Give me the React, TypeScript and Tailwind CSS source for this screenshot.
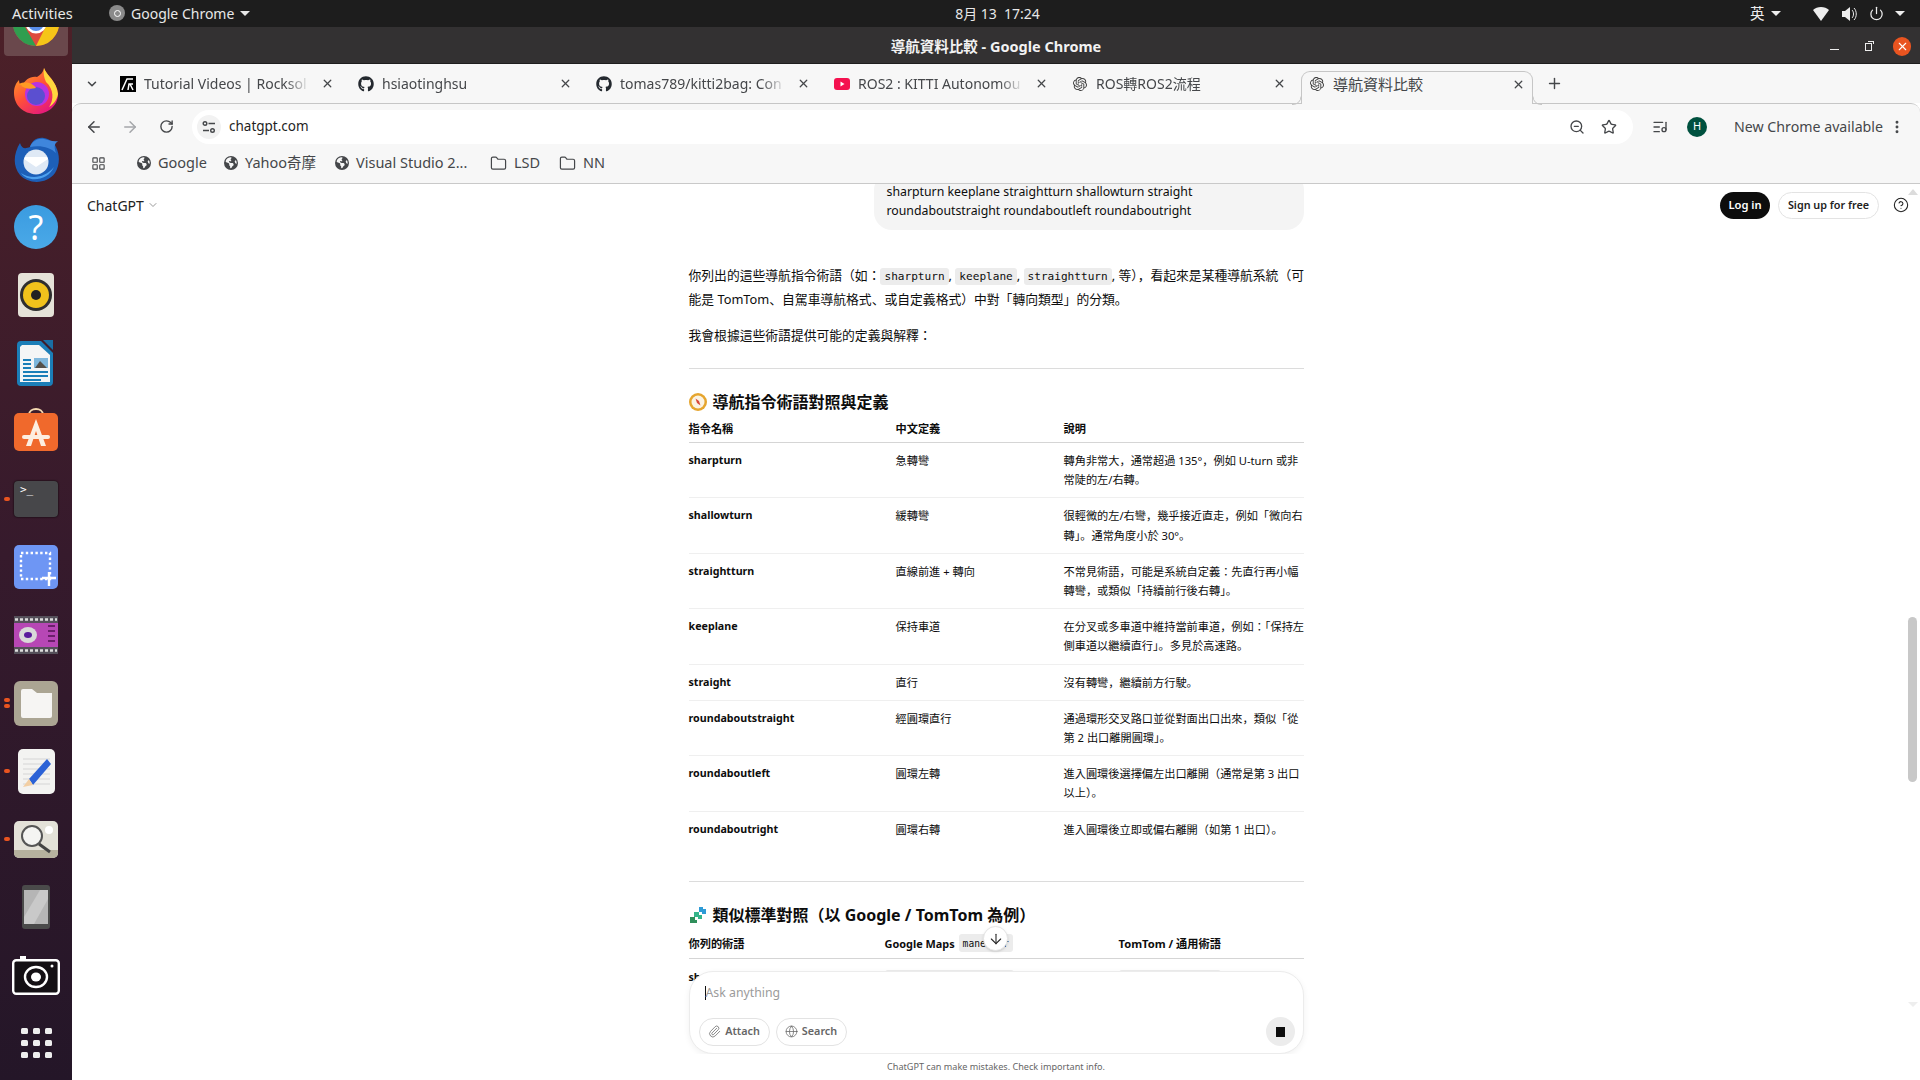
import {
  ArrowDown,
  ArrowLeft,
  ArrowRight,
  ChevronDown,
  CircleHelp,
  EllipsisVertical,
  Folder,
  Globe,
  LayoutGrid,
  ListMusic,
  Paperclip,
  Plus,
  Power,
  RotateCw,
  Star,
  X,
  ZoomOut,
} from "lucide-react";
import type { ReactNode } from "react";
import { FaGithub } from "react-icons/fa";
import { FaEarthAmericas } from "react-icons/fa6";
import { SiOpenai } from "react-icons/si";

const rows1 = [
  ["sharpturn", "急轉彎", "轉角非常大\uFF0C通常超過 135°\uFF0C例如 U-turn 或非\n常陡的左/右轉。"],
  ["shallowturn", "緩轉彎", "很輕微的左/右彎\uFF0C幾乎接近直走\uFF0C例如「微向右\n轉」。通常角度小於 30°。"],
  ["straightturn", "直線前進 + 轉向", "不常見術語\uFF0C可能是系統自定義\uFF1A先直行再小幅\n轉彎\uFF0C或類似「持續前行後右轉」。"],
  ["keeplane", "保持車道", "在分叉或多車道中維持當前車道\uFF0C例如\uFF1A「保持左\n側車道以繼續直行」。多見於高速路。"],
  ["straight", "直行", "沒有轉彎\uFF0C繼續前方行駛。"],
  ["roundaboutstraight", "經圓環直行", "通過環形交叉路口並從對面出口出來\uFF0C類似「從\n第 2 出口離開圓環」。"],
  ["roundaboutleft", "圓環左轉", "進入圓環後選擇偏左出口離開\uFF08通常是第 3 出口\n以上\uFF09。"],
  ["roundaboutright", "圓環右轉", "進入圓環後立即或偏右離開\uFF08如第 1 出口\uFF09。"],
];

function RocksolIcon() {
  return (
    <svg width="16" height="16" viewBox="0 0 16 16">
      <rect width="16" height="16" fill="#000" />
      <path d="M2 14 L7 3 H13 M8 14 L9 8 H13 M10 8 L13 14" fill="none" stroke="#fff" strokeWidth="1.5" />
    </svg>
  );
}

function YoutubeIcon() {
  return (
    <svg width="16" height="16" viewBox="0 0 16 16">
      <rect y="2" width="16" height="12" rx="3" fill="#f4114f" />
      <path d="M6.5 5.5 L10.5 8 L6.5 10.5 Z" fill="#fff" />
    </svg>
  );
}

const tabs: { title: string; icon: ReactNode }[] = [
  { title: "Tutorial Videos | Rocksol", icon: <RocksolIcon /> },
  { title: "hsiaotinghsu", icon: <FaGithub size={16} color="#24292f" /> },
  { title: "tomas789/kitti2bag: Con", icon: <FaGithub size={16} color="#24292f" /> },
  { title: "ROS2 : KITTI Autonomou", icon: <YoutubeIcon /> },
  { title: "ROS轉ROS2流程", icon: <SiOpenai size={14} color="#3c3c3c" /> },
];

function Tab({ title, icon }: { title: string; icon: ReactNode }) {
  return (
    <div className="flex h-[39px] w-[238px] shrink-0 items-center">
      <div className="flex w-[16px] justify-center">{icon}</div>
      <div className="ml-[8px] w-[166px] overflow-hidden whitespace-nowrap text-[14px] text-[#45474a] [mask-image:linear-gradient(to_right,black_85%,transparent)]">
        {title}
      </div>
      <X size={13} strokeWidth={2.4} className="ml-[11px] text-[#45474a]" />
    </div>
  );
}

function Chrome() {
  return (
    <svg width="46" height="46" viewBox="0 0 46 46">
      <circle cx="23" cy="23" r="23" fill="#de4a3c" />
      <path d="M23 46 A23 23 0 0 1 3 11.5 L15 32 Z" fill="#2f9e4f" />
      <path d="M23 46 A23 23 0 0 0 43 11.5 L23 11.5 L32 28 Z" fill="#f5c518" />
      <circle cx="23" cy="23" r="10.5" fill="#fff" />
      <circle cx="23" cy="23" r="8" fill="#5a8ee8" />
    </svg>
  );
}

function Firefox() {
  return (
    <svg width="46" height="48" viewBox="0 0 46 48">
      <defs>
        <linearGradient id="ff" x1="0" y1="0" x2="0.7" y2="1">
          <stop offset="0" stopColor="#ffb01f" />
          <stop offset="0.55" stopColor="#ff4f3a" />
          <stop offset="1" stopColor="#e3177f" />
        </linearGradient>
      </defs>
      <path d="M31 1 C33 8 44 14 45 27 C45 39 35 47 23 47 C10 47 1 38 1 26 C1 20 3 16 6 13 C6 16 7 18 9 19 C12 13 17 9 24 10 C27 8 30 6 31 1 Z" fill="url(#ff)" />
      <path d="M31 1 C33 8 44 14 45 27 C44 33 40 38 36 40 C41 33 41 22 33 15 C31 11 30 6 31 1 Z" fill="#ffd83d" />
      <circle cx="24" cy="27" r="12" fill="#b833e1" />
      <circle cx="23" cy="29" r="9" fill="#5b4fd0" />
      <path d="M6 17 C12 14 20 16 23 21 C18 22 12 23 6 17 Z" fill="#ff9a24" />
    </svg>
  );
}

function Thunderbird() {
  return (
    <svg width="48" height="48" viewBox="0 0 48 48">
      <path d="M8 8 C2 18 0 30 8 40 C16 49 34 50 43 38 C48 30 48 20 44 12 C42 8 38 4 32 3 C24 2 20 6 18 12 C13 14 10 14 8 8 Z" fill="#1d5fb8" />
      <path d="M18 12 C20 6 26 3 32 4 C37 5 41 7 46 6 C42 9 42 12 44 18 C38 12 28 10 18 12 Z" fill="#3f86dc" />
      <circle cx="24" cy="27" r="12.5" fill="#dfe9f5" />
      <path d="M12 24 L24 32 L36 24 L35 22 L13 22 Z" fill="#ffffff" />
      <path d="M9 38 C18 44 32 44 42 32 C36 46 16 48 9 38 Z" fill="#4da0ee" />
    </svg>
  );
}

function Help() {
  return (
    <div className="flex h-[44px] w-[44px] items-center justify-center rounded-full bg-gradient-to-b from-[#3a9be0] to-[#4aa9e8] text-[34px] leading-none text-white">
      ?
    </div>
  );
}

function Rhythmbox() {
  return (
    <svg width="36" height="44" viewBox="0 0 36 44">
      <rect width="36" height="44" rx="4" fill="#e5e2d8" />
      <circle cx="18" cy="22" r="16" fill="#2e2e2e" />
      <circle cx="18" cy="22" r="13" fill="#f0c21c" />
      <circle cx="18" cy="22" r="5" fill="#222" />
    </svg>
  );
}

function Writer() {
  return (
    <svg width="38" height="46" viewBox="0 0 38 46">
      <path d="M26 0 H36 V10 Z" fill="#1a6fa5" />
      <path d="M4 1 H24 L36 13 V42 A4 4 0 0 1 32 46 H4 A4 4 0 0 1 0 42 V5 A4 4 0 0 1 4 1 Z" fill="#1b7eb8" />
      <path d="M5 5 H22 L33 15 V42 H3 V7 Z" fill="#f4f5f6" />
      <path d="M6 19 H14 V21 H6 Z M6 23 H14 V25 H6 Z M6 27 H14 V29 H6 Z M6 31 H31 V33 H6 Z M6 35 H31 V37 H6 Z M6 39 H24 V41 H6 Z" fill="#1b7eb8" />
      <rect x="17" y="18" width="14" height="10" fill="#7fb7dc" />
      <path d="M18 28 L23 21 L26 24 L30 28 Z" fill="#55504a" />
    </svg>
  );
}

function Software() {
  return (
    <svg width="44" height="46" viewBox="0 0 44 46">
      <path d="M15 7 C15 -1 29 -1 29 7" fill="none" stroke="#f4d9b0" strokeWidth="2" />
      <rect y="5" width="44" height="38" rx="5" fill="#f0692c" />
      <path d="M22 11 L32 38 H27 L22 23 L17 38 H12 Z" fill="#fdeee0" />
      <rect x="8" y="27" width="28" height="4" rx="2" fill="#fdeee0" />
    </svg>
  );
}

function Terminal() {
  return (
    <div className="h-[36px] w-[44px] rounded-[4px] bg-[#47474a] pl-[6px] pt-[2px] font-['DejaVu_Sans_Mono',monospace] text-[11px] leading-[14px] text-white shadow-[0_0_2px_#000]">
      {">_"}
    </div>
  );
}

function Screenshot() {
  return (
    <svg width="44" height="44" viewBox="0 0 44 44">
      <rect width="44" height="44" rx="5" fill="#6e96f4" />
      <rect x="7" y="8" width="29" height="26" fill="none" stroke="#fff" strokeWidth="2.4" strokeDasharray="2.4 2.4" />
      <path d="M35 27 V41 M28 33 H42" stroke="#fff" strokeWidth="2.4" />
    </svg>
  );
}

function Video() {
  return (
    <svg width="44" height="38" viewBox="0 0 44 38">
      <rect width="44" height="38" fill="#55505a" />
      <rect y="7" width="44" height="24" fill="#b747b5" />
      <path d="M1 3.5 H43 M1 34.5 H43" stroke="#ddd" strokeWidth="2.4" strokeDasharray="3 2" />
      <ellipse cx="14" cy="19" rx="9" ry="8" fill="#d9d9d9" />
      <ellipse cx="14" cy="19" rx="4" ry="3" fill="#5a1a9c" />
      <path d="M34 10 H41 M34 15 H41 M34 20 H41 M34 25 H41" stroke="#6b1f6b" strokeWidth="2" />
    </svg>
  );
}

function Files() {
  return (
    <svg width="44" height="45" viewBox="0 0 44 45">
      <rect width="44" height="45" rx="6" fill="#aba593" />
      <path d="M7 10 A2 2 0 0 1 9 8 H18 L23 12 H38 V35 A2 2 0 0 1 36 37 H9 A2 2 0 0 1 7 35 Z" fill="#f6f5f3" />
    </svg>
  );
}

function Gedit() {
  return (
    <svg width="37" height="45" viewBox="0 0 37 45">
      <rect width="37" height="45" rx="5" fill="#f3f3f1" />
      <path d="M5 10 H32 M5 15 H32 M5 20 H32 M5 25 H32 M5 30 H32 M5 35 H32" stroke="#d5d5d5" />
      <path d="M11 30 L29 10 L33 15 L15 36 Z" fill="#2b62d6" />
      <path d="M11 30 L15 36 L5 38 Z" fill="#f2cfa4" />
    </svg>
  );
}

function Eog() {
  return (
    <svg width="44" height="37" viewBox="0 0 44 37">
      <rect width="44" height="37" rx="5" fill="#e3e1d8" />
      <path d="M0 29 H44 V32 A5 5 0 0 1 39 37 H5 A5 5 0 0 1 0 32 Z" fill="#b6b29e" />
      <circle cx="35" cy="9" r="4" fill="#fff" />
      <circle cx="18" cy="15" r="10" fill="#f4f4f2" stroke="#555" strokeWidth="2" />
      <path d="M25 23 L36 31" stroke="#444" strokeWidth="3" />
    </svg>
  );
}

function Tablet() {
  return (
    <svg width="28" height="44" viewBox="0 0 28 44">
      <rect width="28" height="44" rx="3" fill="#4a4a4a" />
      <rect x="2" y="5" width="24" height="34" fill="#b5b5b5" />
      <path d="M2 32 L18 5 H26 V14 L12 39 H2 Z" fill="#c9c9c9" />
    </svg>
  );
}

function Camera() {
  return (
    <svg width="48" height="39" viewBox="0 0 48 39">
      <path d="M8 0 H14 V4 H8 Z" fill="#fff" />
      <rect x="1.2" y="4.2" width="45.6" height="33.6" rx="3" fill="#141014" stroke="#fff" strokeWidth="2.4" />
      <ellipse cx="24" cy="21" rx="11" ry="10" fill="none" stroke="#fff" strokeWidth="2.4" />
      <ellipse cx="24" cy="21" rx="5" ry="4.5" fill="#fff" />
      <circle cx="40" cy="10" r="1.5" fill="#fff" />
    </svg>
  );
}

function AppsGrid() {
  return (
    <svg width="32" height="32" viewBox="0 0 32 32" fill="#eee">
      {[0, 12, 24].flatMap((y) =>
        [0, 12, 24].map((x) => <rect key={`${x}-${y}`} x={x + 1} y={y + 1} width="7" height="6" rx="1.5" />),
      )}
    </svg>
  );
}

const dockItems: { icon: ReactNode; dots: number }[] = [
  { icon: <Firefox />, dots: 0 },
  { icon: <Thunderbird />, dots: 0 },
  { icon: <Help />, dots: 0 },
  { icon: <Rhythmbox />, dots: 0 },
  { icon: <Writer />, dots: 0 },
  { icon: <Software />, dots: 0 },
  { icon: <Terminal />, dots: 1 },
  { icon: <Screenshot />, dots: 0 },
  { icon: <Video />, dots: 0 },
  { icon: <Files />, dots: 2 },
  { icon: <Gedit />, dots: 1 },
  { icon: <Eog />, dots: 1 },
  { icon: <Tablet />, dots: 0 },
  { icon: <Camera />, dots: 0 },
  { icon: <AppsGrid />, dots: 0 },
];

function Dock() {
  return (
    <aside className="flex w-[72px] shrink-0 flex-col items-center overflow-hidden bg-gradient-to-b from-[#4c2028] via-[#361a2c] to-[#241628]">
      <div className="-mt-[37px] flex h-[66px] w-[64px] shrink-0 items-center justify-center rounded-b-[4px] bg-[#6a484c]">
        <Chrome />
      </div>
      <div className="h-[1px] shrink-0" />
      {dockItems.map((item, i) => (
        <div key={i} className="relative flex h-[68px] w-full shrink-0 items-center justify-center">
          {item.icon}
          {item.dots > 0 && (
            <div className="absolute left-[4px] top-1/2 flex -translate-y-1/2 flex-col gap-[2px]">
              {Array.from({ length: item.dots }).map((_, d) => (
                <span key={d} className="h-[4px] w-[6px] rounded-full bg-[#e95420]" />
              ))}
            </div>
          )}
        </div>
      ))}
    </aside>
  );
}

function Bookmark({ label, folder, className }: { label: string; folder?: boolean; className: string }) {
  return (
    <div className={`flex items-center gap-[7px] whitespace-nowrap text-[14.5px] text-[#45474a] ${className}`}>
      {folder ? (
        <Folder size={17} strokeWidth={1.7} className="shrink-0" />
      ) : (
        <FaEarthAmericas size={14} className="shrink-0" />
      )}
      <span>{label}</span>
    </div>
  );
}

function Code({ children }: { children: ReactNode }) {
  return (
    <code className="rounded-[3px] bg-[#ececec] px-[4px] py-[2px] font-['DejaVu_Sans_Mono',monospace] text-[11.1px] leading-none text-[#0d0d0d]">
      {children}
    </code>
  );
}

function CompassEmoji() {
  return (
    <svg width="18" height="18" viewBox="0 0 18 18">
      <circle cx="9" cy="9" r="9" fill="#e6a52e" />
      <circle cx="9" cy="9" r="6.5" fill="#fbf3e3" />
      <path d="M6.5 5.5 L10 8 L11.5 12.5 L8 10 Z" fill="#d9483b" />
    </svg>
  );
}

function PuzzleEmoji() {
  return (
    <svg width="18" height="18" viewBox="0 0 18 18">
      <path d="M10 1 H14 V3 H17 V8 H13 V6 H10 Z" fill="#2e9bd6" />
      <path d="M5 6 H10 V9 H13 V13 H9 V11 H5 Z" fill="#35b58a" />
      <path d="M1 11 H6 V14 H8 V17 H1 Z" fill="#2f8f5b" />
    </svg>
  );
}

export default function App() {
  return (
    <div className="flex h-[1080px] w-[1920px] flex-col overflow-hidden bg-white font-['Noto_Sans','Noto_Sans_CJK_JP',sans-serif]">
      {/* gnome top bar */}
      <header className="flex h-[27px] shrink-0 items-center bg-[#1d1d1d] text-[14px] text-[#e8e8e8]">
        <div className="flex w-[955px] items-center pl-[12px]">
          <span className="w-[62px] whitespace-nowrap text-[14.6px]">Activities</span>
          <span className="ml-[35px] flex h-[16px] w-[16px] items-center justify-center rounded-full bg-[#8a8a8a]">
            <span className="h-[7px] w-[7px] rounded-full border border-white" />
          </span>
          <span className="ml-[6px]">Google Chrome</span>
          <span className="ml-[6px] h-0 w-0 border-x-[5px] border-t-[5px] border-x-transparent border-t-[#e8e8e8]" />
        </div>
        <div className="w-[85px] whitespace-pre text-center">8月 13  17:24</div>
        <div className="flex flex-1 items-center pl-[708px] text-[#eee]">
          <span className="absolute left-[1750px] text-[14.5px]">英</span>
          <span className="absolute left-[1771px] h-0 w-0 border-x-[5px] border-t-[5px] border-x-transparent border-t-[#eee]" />
          <svg className="absolute left-[1813px]" width="16" height="14" viewBox="0 0 16 14" fill="#eee">
            <path d="M0 3 C4 -1 12 -1 16 3 L8 14 Z" />
          </svg>
          <svg className="absolute left-[1842px]" width="15" height="14" viewBox="0 0 15 14" fill="#eee">
            <path d="M0 4 H3 L8 0 V14 L3 10 H0 Z" />
            <path d="M10 3 C12 5 12 9 10 11 M12 1 C15 4 15 10 12 13" fill="none" stroke="#eee" />
          </svg>
          <Power size={15} className="absolute left-[1869px]" />
          <span className="absolute left-[1895px] h-0 w-0 border-x-[5px] border-t-[5px] border-x-transparent border-t-[#eee]" />
        </div>
      </header>

      <div className="flex min-h-0 flex-1">
        <Dock />

        <div className="flex min-w-0 flex-1 flex-col">
          {/* window title */}
          <div className="grid h-[37px] shrink-0 grid-cols-[1fr_auto_1fr] items-center border-b border-[#1e1e1e] bg-[#333132] pt-[3px] text-[14.5px] font-bold text-[#f2f2f2]">
            <div />
            <div>導航資料比較 - Google Chrome</div>
            <div className="flex items-center justify-end pr-[9px]">
              <span className="mt-[6px] h-[1.5px] w-[9px] bg-[#eee]" />
              <span className="relative ml-[26px] mt-[1px] h-[8px] w-[7px] border border-[#eee]">
                <span className="absolute -right-[3px] -top-[3px] h-[3px] w-[6px] border-r border-t border-[#eee]" />
              </span>
              <span className="ml-[21px] flex h-[19px] w-[18px] items-center justify-center rounded-full bg-[#e95420]">
                <X size={13} strokeWidth={2} className="text-white" />
              </span>
            </div>
          </div>

          {/* tabs */}
          <div className="flex h-[39px] shrink-0 items-center bg-[#f7f7f7]">
            <ChevronDown size={14} strokeWidth={2.6} className="ml-[13px] mr-[21px] text-[#45474a]" />
            {tabs.map((t) => (
              <Tab key={t.title} title={t.title} icon={t.icon} />
            ))}
            <div className="relative z-10 -ml-[9px] mt-[7px] -mb-px flex h-[33px] w-[232px] shrink-0 items-center rounded-t-[9px] border-x border-t border-[#c6c6c6] bg-[#f7f7f7] pb-[8px] pl-[8px]">
              <SiOpenai size={14} color="#3c3c3c" />
              <span className="ml-[9px] w-[179px] text-[15px] text-[#45474a]">導航資料比較</span>
              <X size={13} strokeWidth={2.4} className="text-[#45474a]" />
              <svg className="absolute -left-[10px] -bottom-px" width="9" height="9" viewBox="0 0 9 9" fill="none" stroke="#c6c6c6">
                <path d="M0 8.5 H1 A8 8 0 0 0 9 0.5" />
              </svg>
              <svg className="absolute -right-[10px] -bottom-px" width="9" height="9" viewBox="0 0 9 9" fill="none" stroke="#c6c6c6">
                <path d="M9 8.5 H8 A8 8 0 0 1 0 0.5" />
              </svg>
            </div>
            <Plus size={17} strokeWidth={2} className="ml-[13px] text-[#45474a]" />
          </div>

          {/* toolbar */}
          <div className="flex h-[41px] shrink-0 items-center rounded-t-[9px] border-t border-[#c6c6c6] bg-[#f7f7f7] pl-[13px] pt-[5px]">
            <ArrowLeft size={18} strokeWidth={2} className="text-[#45474a]" />
            <ArrowRight size={18} strokeWidth={2} className="ml-[18px] text-[#a5a7aa]" />
            <RotateCw size={15} strokeWidth={2.2} className="ml-[20px] text-[#45474a]" />
            <div className="ml-[18px] flex h-[34px] w-[1441px] items-center rounded-full bg-white pl-[5px] pr-[16px]">
              <span className="flex h-[24px] w-[24px] items-center justify-center rounded-full bg-[#f2f2f2]">
                <svg width="14" height="14" viewBox="0 0 14 14" fill="none" stroke="#45474a" strokeWidth="1.4">
                  <circle cx="3" cy="3.5" r="1.8" />
                  <path d="M6.5 3.5 H13 M1 10.5 H7" />
                  <circle cx="10.5" cy="10.5" r="1.8" />
                </svg>
              </span>
              <span className="ml-[8px] flex-1 text-[13.5px] text-[#1f1f1f]">chatgpt.com</span>
              <ZoomOut size={16} strokeWidth={2} className="text-[#45474a]" />
              <Star size={16} strokeWidth={2} className="ml-[16px] text-[#45474a]" />
            </div>
            <ListMusic size={16} strokeWidth={2} className="ml-[19px] text-[#45474a]" />
            <span className="ml-[19px] flex h-[20px] w-[20px] items-center justify-center rounded-full bg-[#00513f] text-[11px] text-white">H</span>
            <span className="ml-[27px] w-[151px] whitespace-nowrap text-[14.2px] text-[#45474a]">New Chrome available</span>
            <EllipsisVertical size={16} strokeWidth={2.4} className="ml-[4px] text-[#45474a]" />
          </div>

          {/* bookmarks */}
          <div className="flex h-[40px] shrink-0 items-center border-b border-[#c9c9c9] bg-[#f7f7f7] pb-[1px] pl-[19px]">
            <LayoutGrid size={15} strokeWidth={1.8} className="mr-[31px] text-[#45474a]" />
            <Bookmark label="Google" className="w-[87px]" />
            <Bookmark label="Yahoo奇摩" className="w-[111px]" />
            <Bookmark label="Visual Studio 2..." className="w-[155px]" />
            <Bookmark label="LSD" folder className="w-[69px]" />
            <Bookmark label="NN" folder className="w-[50px]" />
          </div>

          {/* chat page */}
          <main className="relative min-h-0 flex-1 overflow-hidden bg-white text-[#0d0d0d]">
            <div className="absolute left-0 right-0 top-0 z-10 flex h-[42px] items-center pl-[15px] pr-[11px]">
              <span className="text-[14px] text-[#222]">ChatGPT</span>
              <ChevronDown size={12} strokeWidth={1.5} className="ml-[3px] text-[#777]" />
              <span className="ml-auto flex h-[27px] w-[50px] items-center justify-center rounded-full bg-[#0d0d0d] text-[11.2px] font-semibold text-white">Log in</span>
              <span className="ml-[8px] flex h-[27px] w-[101px] items-center justify-center rounded-full border border-[#e3e3e3] text-[10.8px] font-semibold text-[#222]">Sign up for free</span>
              <CircleHelp size={16} strokeWidth={1.6} className="ml-[14px] text-[#222]" />
            </div>

            <div className="mx-auto w-[615px]">
              <div className="-mt-[12px] ml-[185px] rounded-[18px] bg-[#f4f4f4] px-[13px] pb-[10px] pt-[10px] text-[12.3px] leading-[19px]">
                sharpturn keeplane straightturn shallowturn straight
                <br />
                roundaboutstraight roundaboutleft roundaboutright
              </div>

              <p className="mt-[33px] whitespace-nowrap text-[12.8px] leading-[24px]">
                {"你列出的這些導航指令術語\uFF08如\uFF1A"}
                <Code>sharpturn</Code>, <Code>keeplane</Code>, <Code>straightturn</Code>
                {", 等\uFF09\uFF0C看起來是某種導航系統\uFF08可"}
                <br />
                {"能是 TomTom、自駕車導航格式、或自定義格式\uFF09中對「轉向類型」的分類。"}
              </p>
              <p className="mt-[12px] text-[12.8px] leading-[24px]">{"我會根據這些術語提供可能的定義與解釋\uFF1A"}</p>

              <hr className="mt-[21px] border-t border-[#dcdcdc]" />

              <h3 className="mt-[22px] flex items-center gap-[6px] text-[16px] font-bold leading-[22px]">
                <CompassEmoji />
                導航指令術語對照與定義
              </h3>

              <div className="mt-[6px] grid grid-cols-[207px_168px_1fr] border-b border-[#d5d5d5] pb-[4px] text-[11.2px] font-bold leading-[19px]">
                <div>指令名稱</div>
                <div>中文定義</div>
                <div>說明</div>
              </div>

              {rows1.map((r, i) => (
                <div
                  key={r[0]}
                  className={`grid grid-cols-[207px_168px_1fr] pb-[8px] pt-[8px] text-[11.2px] leading-[19.2px] ${i < rows1.length - 1 ? "border-b border-[#efefef]" : ""}`}
                >
                  <div className="text-[10.7px] font-bold">{r[0]}</div>
                  <div>{r[1]}</div>
                  <div className="whitespace-pre">{r[2]}</div>
                </div>
              ))}

              <hr className="mt-[34px] border-t border-[#dcdcdc]" />

              <h3 className="mt-[22px] flex items-center gap-[6px] text-[16px] font-bold leading-[22px]">
                <PuzzleEmoji />
                {"類似標準對照\uFF08以 Google / TomTom 為例\uFF09"}
              </h3>

              <div className="mt-[8px] grid grid-cols-[196px_234px_1fr] items-center border-b border-[#d5d5d5] pb-[5px] text-[11.2px] font-bold leading-[19px]">
                <div>你列的術語</div>
                <div className="flex items-center gap-[4px] text-[10.9px]">
                  Google Maps
                  <code className="h-[18px] rounded-[3px] bg-[#ececec] px-[4px] font-['DejaVu_Sans_Mono',monospace] text-[9.6px] font-normal">maneuver</code>
                </div>
                <div>TomTom / 通用術語</div>
              </div>
              <div className="grid grid-cols-[196px_234px_1fr] pt-[9px] text-[10.7px] font-bold leading-[19px]">
                <div>sharpturn</div>
                <div className="mt-[2px] h-[22px] w-[129px] rounded-[3px] bg-[#ececec]" />
                <div className="mt-[2px] h-[22px] w-[102px] rounded-[3px] bg-[#ececec]" />
              </div>
            </div>

            {/* scroll to bottom button */}
            <div className="absolute left-[911px] top-[742px] z-20 flex h-[25px] w-[25px] items-center justify-center rounded-full border border-[#e5e5e5] bg-white shadow-sm">
              <ArrowDown size={16} strokeWidth={1.6} className="text-[#222]" />
            </div>

            {/* composer */}
            <div className="absolute bottom-0 left-0 right-0 z-10">
              <div className="mx-auto flex h-[83px] w-[615px] flex-col justify-between rounded-[24px] border border-[#ececec] bg-white pb-[7px] pl-[9px] pr-[8px] pt-[11px] shadow-[0_2px_6px_rgba(0,0,0,0.06)]">
                <div className="ml-[6px] flex items-center text-[12.3px] leading-[20px] text-[#9b9b9b]">
                  <span className="h-[14px] w-px bg-[#111]" />
                  Ask anything
                </div>
                <div className="flex items-center gap-[6px]">
                  <span className="flex h-[28px] w-[71px] items-center justify-center gap-[4px] rounded-full border border-[#e3e3e3] text-[10.8px] font-semibold text-[#666]">
                    <Paperclip size={13} strokeWidth={1.4} /> Attach
                  </span>
                  <span className="flex h-[28px] w-[71px] items-center justify-center gap-[4px] rounded-full border border-[#e3e3e3] text-[10.8px] font-semibold text-[#666]">
                    <Globe size={13} strokeWidth={1.4} /> Search
                  </span>
                  <span className="ml-auto flex h-[29px] w-[29px] items-center justify-center rounded-full bg-[#ececec]">
                    <span className="h-[10px] w-[9px] bg-[#0d0d0d]" />
                  </span>
                </div>
              </div>
              <div className="flex h-[26px] items-center justify-center bg-white text-[9.1px] text-[#666]">
                ChatGPT can make mistakes. Check important info.
              </div>
            </div>

            {/* page scrollbar */}
            <div className="absolute right-[3px] top-[433px] z-20 h-[165px] w-[9px] rounded-full bg-[#c8c8c8]" />
            <div className="absolute right-[2px] top-[5px] z-20 h-0 w-0 border-x-[5px] border-b-[6px] border-x-transparent border-b-[#dcdcdc]" />
            <div className="absolute right-[2px] top-[818px] z-20 h-0 w-0 border-x-[5px] border-t-[5px] border-x-transparent border-t-[#eeeeee]" />
          </main>
        </div>
      </div>
    </div>
  );
}
